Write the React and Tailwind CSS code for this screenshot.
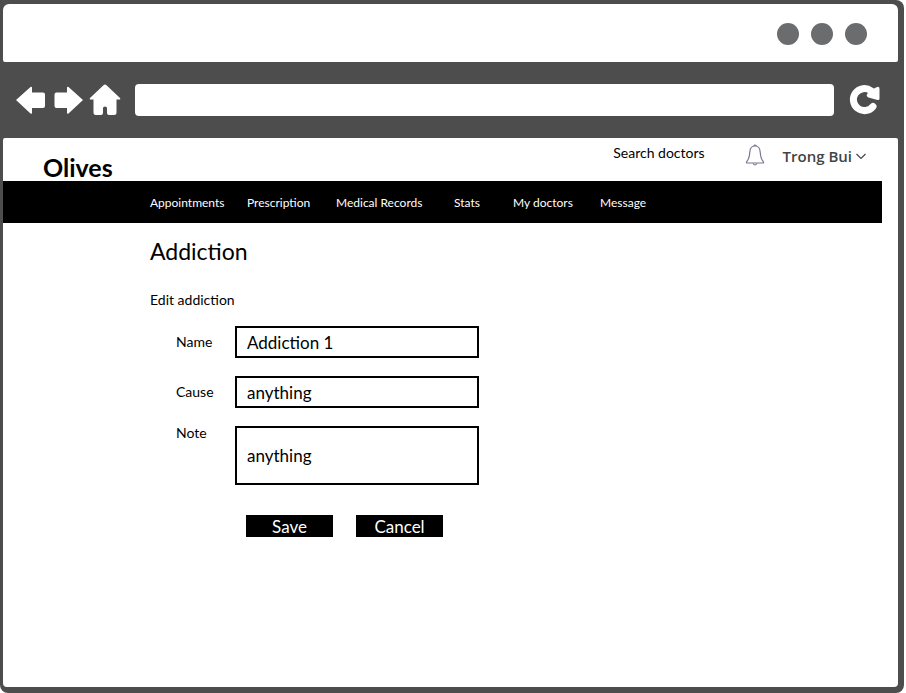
import { useState } from "react";

const LINKS = ["Appointments", "Prescription", "Medical Records", "Stats", "My doctors", "Message"];

function WindowBar() {
  return (
    <div className="flex h-[58px] items-center justify-end gap-3 rounded-t-md rounded-b-xs bg-white pt-0.5 pr-[31px]">
      <span className="size-[22px] rounded-full bg-[#6b6c6e]" />
      <span className="size-[22px] rounded-full bg-[#6b6c6e]" />
      <span className="size-[22px] rounded-full bg-[#6b6c6e]" />
    </div>
  );
}

function Toolbar() {
  return (
    <div className="flex h-[76px] items-center pr-[18px] pl-3">
      <button type="button" aria-label="Back" className="mr-2">
        <svg className="h-8 w-[30px]" viewBox="0 0 30 32" fill="#fff">
          <path d="M1 16 15.500 3 Q17 2 17 4 V8.500 H28 Q30 8.500 30 10.500 V22 Q30 24 28 24 H17 V28.500 Q17 30.500 15.500 29.500 Z" />
        </svg>
      </button>
      <button type="button" aria-label="Forward" className="mr-1.5">
        <svg className="h-8 w-[30px]" viewBox="0 0 30 32" fill="#fff">
          <path d="M30 16 15.500 3 Q14 2 14 4 V8.500 H3.500 Q1.500 8.500 1.500 10.500 V22 Q1.500 24 3.500 24 H14 V28.500 Q14 30.500 15.500 29.500 Z" />
        </svg>
      </button>
      <button type="button" aria-label="Home" className="mr-3.5">
        <svg className="h-8 w-8" viewBox="0 0 32 32" fill="#fff">
          <path d="M16 .5 Q16.800 .5 17.500 1.200 L31 14 Q32 15.500 30 15.500 H27.500 V28.500 Q27.500 31 25 31 H20 Q18 31 18 29 V24 Q18 22.500 16 22.500 Q14 22.500 14 24 V29 Q14 31 12 31 H7 Q4.500 31 4.500 28.500 V15.500 H2 Q0 15.500 1 14 L14.500 1.200 Q15.200 .5 16 .5 Z" />
        </svg>
      </button>
      <input
        type="text"
        aria-label="Address"
        className="h-8 min-w-0 flex-1 rounded-sm bg-white px-3 text-sm outline-none"
      />
      <button type="button" aria-label="Reload" className="ml-3.5">
        <svg className="h-8 w-8" viewBox="0 0 32 32" fill="none">
          <path d="M25 22.500 A11 11 0 1 1 23 6.800" stroke="#fff" strokeWidth="7" strokeLinecap="round" />
          <path d="M22 4.500 25 5 28 3.500 Q31.500 1.500 31.500 5 V14.500 Q31.500 16.500 29.500 16 L20.500 13.500 Q17.500 12 19.500 9.500 Z" fill="#fff" />
        </svg>
      </button>
    </div>
  );
}

function Header() {
  return (
    <header className="flex h-[43px] items-start pr-8 pl-10">
      <span className="pt-[15px] text-[25px] leading-7 font-bold">Olives</span>
      <a href="#search" className="mt-[5px] ml-auto text-sm leading-5">
        Search doctors
      </a>
      <button type="button" aria-label="Notifications" className="mt-1.5 ml-10">
        <svg className="h-[22px] w-5" viewBox="0 0 20 22" fill="none" stroke="#77778f" strokeWidth="1.200">
          <path d="M10 2 C6.500 2 5 4.500 4.800 8 C4.500 13 4 15 1.800 17.500 C1 18.500 1.500 19 2.500 19 H17.500 C18.500 19 19 18.500 18.200 17.500 C16 15 15.500 13 15.200 8 C15 4.500 13.500 2 10 2 Z" />
          <path d="M8.500 2 Q10 0 11.500 2 M8 19.500 Q10 22.500 12 19.500" />
        </svg>
      </button>
      <button
        type="button"
        className="mt-2 ml-[18px] flex items-center gap-1 font-['Open_Sans','Noto_Sans',sans-serif] text-[15px] leading-5 font-semibold text-[#444]"
      >
        Trong Bui
        <svg className="size-2.5" viewBox="0 0 10 10" fill="none" stroke="#444" strokeWidth="1.200">
          <path d="M.5 3 5 7.500 9.500 3" />
        </svg>
      </button>
    </header>
  );
}

function Nav() {
  return (
    <nav className="mr-4 grid h-[42px] grid-cols-[97px_89px_118px_59px_87px_auto] items-center bg-black pt-px pl-[147px] text-xs whitespace-nowrap text-white">
      {LINKS.map((label) => (
        <a key={label} href="#section">
          {label}
        </a>
      ))}
    </nav>
  );
}

const FIELD = "w-full border-2 border-black bg-white px-2.5 text-[17px] outline-none";

function EditForm() {
  const [values, setValues] = useState({ name: "Addiction 1", cause: "anything", note: "anything" });
  const change = (e) => setValues({ ...values, [e.target.name]: e.target.value });
  return (
    <form onSubmit={(e) => e.preventDefault()} className="mt-4 ml-[26px]">
      <div className="grid max-w-[303px] grid-cols-[59px_1fr] gap-y-[18px]">
        <label htmlFor="name" className="self-center text-sm">Name</label>
        <input id="name" name="name" value={values.name} onChange={change} className={`${FIELD} h-8`} />
        <label htmlFor="cause" className="self-center text-sm">Cause</label>
        <input id="cause" name="cause" value={values.cause} onChange={change} className={`${FIELD} h-8`} />
        <label htmlFor="note" className="self-start text-sm leading-[14px]">Note</label>
        <textarea id="note" name="note" value={values.note} onChange={change} className={`${FIELD} block h-[59px] resize-none py-4 leading-6`} />
      </div>
      <div className="mt-[30px] ml-[70px] flex gap-[23px] text-[17px] leading-5 text-white">
        <button type="submit" className="w-[87px] bg-black pt-0.5">Save</button>
        <button type="button" className="w-[87px] bg-black pt-0.5">Cancel</button>
      </div>
    </form>
  );
}

export default function App() {
  return (
    <div className="min-h-screen bg-white pr-0.5 font-['Lato','Liberation_Sans',sans-serif] text-black">
      <div className="flex min-h-screen flex-col rounded-r-lg rounded-bl-lg bg-[#4d4d4d] pt-1 pr-1.5 pb-1.5 pl-[3px]">
        <WindowBar />
        <Toolbar />
        <div className="flex-1 rounded-t-xs rounded-b-sm bg-white">
          <Header />
          <Nav />
          <main className="pl-[147px]">
            <h1 className="pt-3 text-[23px] leading-8">Addiction</h1>
            <h2 className="mt-[23px] text-sm leading-5">Edit addiction</h2>
            <EditForm />
          </main>
        </div>
      </div>
    </div>
  );
}
